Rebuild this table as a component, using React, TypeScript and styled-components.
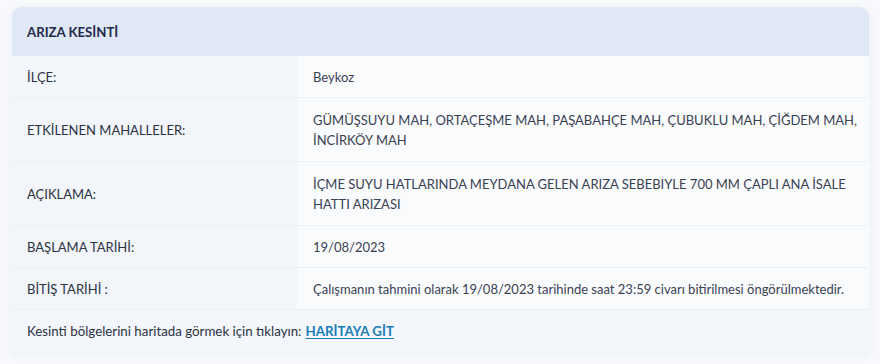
import React from 'react';
import styled, { createGlobalStyle } from 'styled-components';

const GlobalStyle = createGlobalStyle`
  body {
    margin: 0;
    background: #f7f9fc;
    font-family: 'Lato', 'Noto Sans', sans-serif;
    color: #2b3243;
  }
`;

const Page = styled.div`
  padding: 7px 11px 14px 12px;
`;

const Card = styled.div`
  background: #f9fbfd;
  border-radius: 10px 10px 0 0;
  box-shadow: 0 2px 10px rgba(40, 60, 110, 0.06);
  overflow: hidden;
`;

const Header = styled.div`
  background: #e0e7f6;
  height: 49px;
  display: flex;
  align-items: center;
  padding: 0 15px;
  font-size: 13.2px;
  font-weight: 700;
  color: #1f2a48;
`;

const Row = styled.div`
  display: grid;
  grid-template-columns: 285px 1fr;
  border-bottom: 1px solid #eceff4;
`;

const Label = styled.div<{ $tall?: boolean }>`
  background: #f2f5f9;
  display: flex;
  align-items: center;
  padding: 0 15px;
  min-height: ${p => (p.$tall ? 63 : 41)}px;
  font-size: 13px;
  color: #2b3243;
`;

const Value = styled.div`
  display: flex;
  align-items: center;
  padding: 10px 6px 10px 16px;
  font-size: 13px;
  line-height: 20px;
  color: #3a4152;
`;

const Footer = styled.div`
  background: #f3f6fb;
  height: 42px;
  display: flex;
  align-items: center;
  padding: 0 15px;
  font-size: 13.3px;
  color: #2b3243;
`;

const MapLink = styled.a`
  margin-left: 4px;
  color: #1b7db4;
  font-weight: 700;
  text-decoration: underline;
  text-underline-offset: 2px;
`;

const rows: { label: string; value: string; tall?: boolean }[] = [
  { label: 'İLÇE:', value: 'Beykoz' },
  {
    label: 'ETKİLENEN MAHALLELER:',
    value: 'GÜMÜŞSUYU MAH, ORTAÇEŞME MAH, PAŞABAHÇE MAH, ÇUBUKLU MAH, ÇİĞDEM MAH, İNCİRKÖY MAH',
    tall: true,
  },
  {
    label: 'AÇIKLAMA:',
    value: 'İÇME SUYU HATLARINDA MEYDANA GELEN ARIZA SEBEBIYLE 700 MM ÇAPLI ANA İSALE HATTI ARIZASI',
    tall: true,
  },
  { label: 'BAŞLAMA TARİHİ:', value: '19/08/2023' },
  {
    label: 'BİTİŞ TARİHİ :',
    value: 'Çalışmanın tahmini olarak 19/08/2023 tarihinde saat 23:59 civarı bitirilmesi öngörülmektedir.',
  },
];

const App: React.FC = () => (
  <Page>
    <GlobalStyle />
    <Card>
      <Header>ARIZA KESİNTİ</Header>
      {rows.map(r => (
        <Row key={r.label}>
          <Label $tall={r.tall}>{r.label}</Label>
          <Value>{r.value}</Value>
        </Row>
      ))}
      <Footer>
        Kesinti bölgelerini haritada görmek için tıklayın:
        <MapLink href="#">HARİTAYA GİT</MapLink>
      </Footer>
    </Card>
  </Page>
);

export default App;
